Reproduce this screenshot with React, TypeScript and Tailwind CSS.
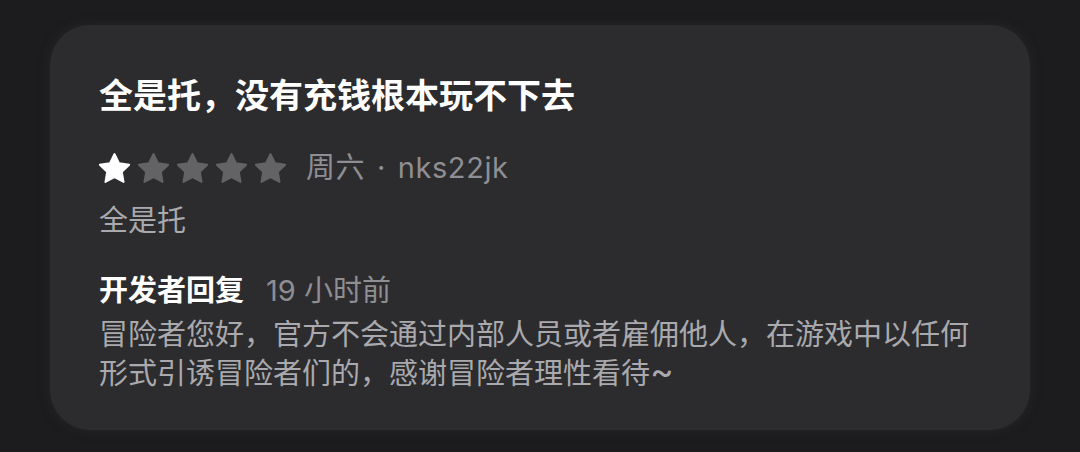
const STAR_PATH =
  'M12 2.5l2.9 5.9 6.5.95-4.7 4.6 1.1 6.45L12 17.35l-5.8 3.05 1.1-6.45-4.7-4.6 6.5-.95L12 2.5z';

function Star({ filled }: { filled: boolean }) {
  const color = filled ? '#ffffff' : '#636366';
  return (
    <svg width="31" height="30" viewBox="2.1 1.9 19.8 19.1" className="shrink-0">
      <path d={STAR_PATH} fill={color} stroke={color} strokeWidth="1.2" strokeLinejoin="round" />
    </svg>
  );
}

export default function App() {
  const rating = 1;

  return (
    <div
      className="w-[1080px] h-[452px] bg-[#1c1c1e] pt-[25px] pl-[50px] overflow-hidden"
      style={{ fontFamily: 'Inter, "Noto Sans CJK SC", "Noto Sans", sans-serif' }}
    >
      <div className="w-[980px] h-[405px] rounded-[40px] bg-[#2c2c2e] shadow-[0_0_12px_rgba(60,60,64,0.35)] pt-[51px] pl-[49px] flex flex-col">
        {/* Title */}
        <h1 className="text-[34px] leading-[40px] font-bold text-white">
          全是托，没有充钱根本玩不下去
        </h1>

        {/* Rating + meta */}
        <div className="mt-[32px] h-[40px] flex items-center">
          <div className="flex items-center gap-[8px]">
            {[1, 2, 3, 4, 5].map((i) => (
              <Star key={i} filled={i <= rating} />
            ))}
          </div>
          <span className="ml-[20px] text-[29px] leading-[40px] tracking-[0.6px] text-[#8e8e93]">
            周六 <span className="mx-[3px]">·</span> nks22jk
          </span>
        </div>

        {/* Review body */}
        <p className="mt-[14px] text-[29px] leading-[37px] text-[#a9a9ae]">全是托</p>

        {/* Developer reply */}
        <div className="mt-[33px] flex items-baseline text-[29px] leading-[37px]">
          <span className="font-bold text-white">开发者回复</span>
          <span className="ml-[22px] text-[#8e8e93]">19 小时前</span>
        </div>
        <p className="mt-[7px] w-[900px] text-[29px] leading-[37px] text-[#a9a9ae]">
          冒险者您好，官方不会通过内部人员或者雇佣他人，在游戏中以任何
          <br />
          形式引诱冒险者们的，感谢冒险者理性看待<span className="text-[36px] leading-[37px]">~</span>
        </p>
      </div>
    </div>
  );
}
